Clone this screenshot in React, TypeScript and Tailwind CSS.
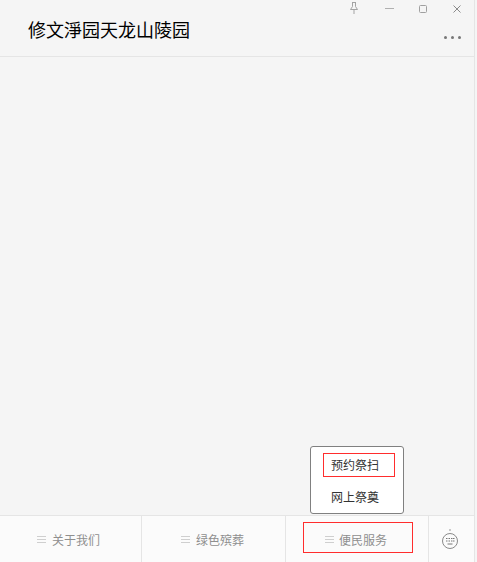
import React from "react";

const font = { fontFamily: '"Noto Sans CJK SC", "Liberation Sans", sans-serif' };

function Lines() {
  return (
    <svg width="9" height="8" viewBox="0 0 9 8" className="shrink-0">
      <path d="M0 .5h9M0 3.500h9M0 6.500h9" stroke="#cfcfcf" strokeWidth="1" />
    </svg>
  );
}

function Label({ label, gap }: { label: string; gap: string }) {
  return (
    <div className={`flex items-center ${gap}`}>
      <Lines />
      <span className="text-[12px] leading-[16px] text-[#8f8f8f]">{label}</span>
    </div>
  );
}

export default function App() {
  return (
    <div className="w-[477px] h-[562px] bg-[#f5f5f5] flex overflow-hidden" style={font}>
      <div className="relative w-[475px] h-full flex flex-col border-r border-[#e5e5e5]">
        <header className="relative h-[57px] shrink-0 border-b border-[#e5e5e5] flex items-center pl-[28px]">
          <h1 className="text-[18px] leading-[24px] font-normal text-black mt-[2px]">修文淨园天龙山陵园</h1>
          <div className="absolute right-[13px] top-[2px] flex items-center text-[#8c8c8c]">
            <svg width="10" height="13" viewBox="0 0 10 13" fill="none" stroke="#a3a3a3" strokeWidth="1">
              <path d="M3 .5h4M3.500 .5v4L1.500 7.500h7L6.500 4.500v-4M5 7.500V12" />
            </svg>
            <svg width="9" height="9" viewBox="0 0 9 9" className="ml-[26px]">
              <path d="M0 4.500h9" stroke="#b0b0b0" strokeWidth="1" />
            </svg>
            <svg width="8" height="8" viewBox="0 0 8 8" fill="none" className="ml-[25px]">
              <rect x=".5" y=".5" width="7" height="7" rx="1" stroke="#a0a0a0" strokeWidth="1" />
            </svg>
            <svg width="8" height="8" viewBox="0 0 8 8" fill="none" className="ml-[26px]">
              <path d="M.5 .5l7 7M7.500 .5l-7 7" stroke="#8a8a8a" strokeWidth="1" />
            </svg>
          </div>
          <div className="absolute right-[13px] top-[36px] flex gap-[4px]">
            <span className="w-[3px] h-[3px] rounded-full bg-[#777777]" />
            <span className="w-[3px] h-[3px] rounded-full bg-[#777777]" />
            <span className="w-[3px] h-[3px] rounded-full bg-[#777777]" />
          </div>
        </header>
        <main className="flex-1" />
        <div className="absolute left-[310px] top-[446px] w-[94px] h-[68px] bg-white border border-[#808080] rounded-[3px] flex flex-col items-start">
          <div className="mt-[6px] ml-[12px] w-[72px] h-[24px] border border-[#ff2d2d] flex items-center pl-[7px] text-[12px] leading-[16px] text-[#333333]">
            预约祭扫
          </div>
          <div className="mt-[12px] ml-[20px] text-[12px] leading-[16px] text-[#333333]">网上祭奠</div>
        </div>
        <footer className="h-[47px] shrink-0 bg-[#fbfbfb] border-t border-[#e5e5e5] flex">
          <div className="w-[142px] shrink-0 flex items-center pl-[37px] pt-[2px] border-r border-[#e5e5e5]">
            <Label label="关于我们" gap="gap-[6px]" />
          </div>
          <div className="w-[144px] shrink-0 flex items-center pl-[39px] pt-[2px] border-r border-[#e5e5e5]">
            <Label label="绿色殡葬" gap="gap-[6px]" />
          </div>
          <div className="w-[143px] shrink-0 flex items-center pl-[17px] border-r border-[#e5e5e5]">
            <div className="w-[110px] h-[31px] -mt-[3px] pt-[4px] border border-[#ff2d2d] flex items-center pl-[21px]">
              <Label label="便民服务" gap="gap-[5px]" />
            </div>
          </div>
          <div className="flex-1 flex items-center pl-[12px]">
            <svg width="18" height="21" viewBox="0 0 18 21" fill="none">
              <circle cx="9" cy="1" r=".8" fill="#8a8a8a" />
              <circle cx="9" cy="12" r="7.500" stroke="#8a8a8a" strokeWidth="1" />
              <path d="M5 9.500h1.500M7.500 9.500H9M10 9.500h1.500M12 9.500h1.500M5 12h1.500M7.500 12H9M10 12h1.500M12 12h1.500M6.500 15h5" stroke="#777777" strokeWidth="1" />
            </svg>
          </div>
        </footer>
      </div>
    </div>
  );
}
